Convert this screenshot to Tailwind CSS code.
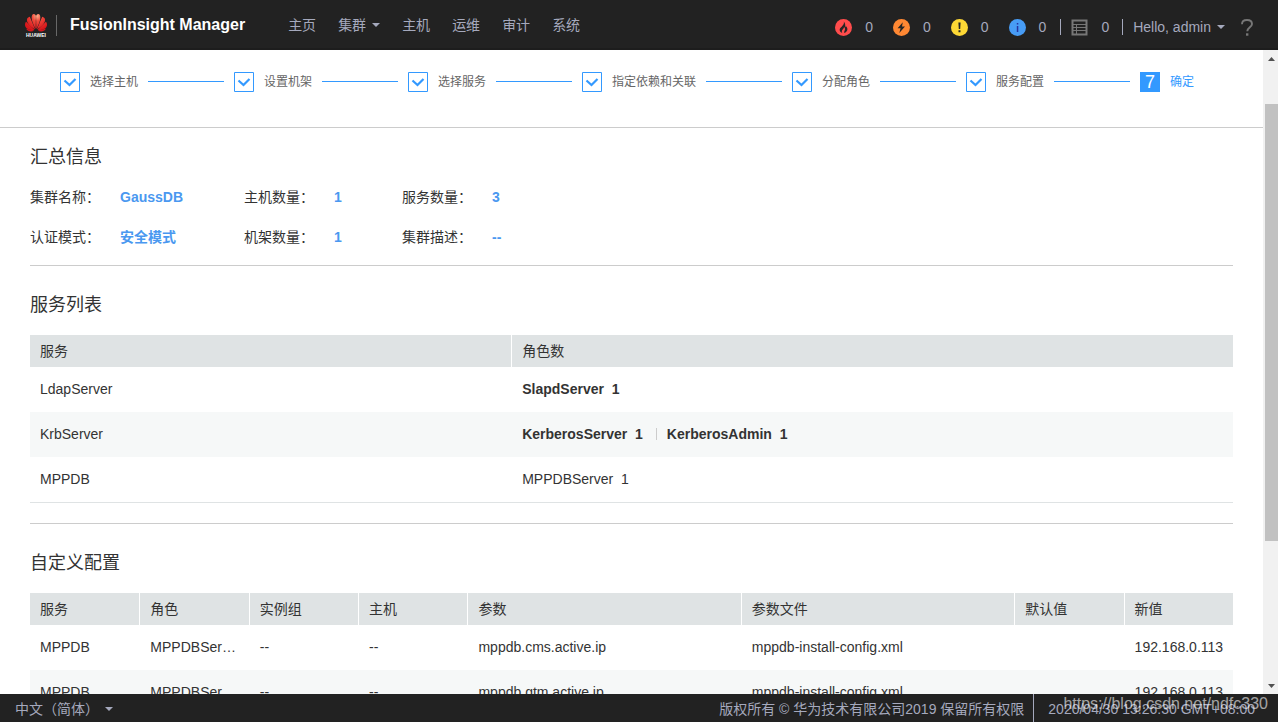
<!DOCTYPE html>
<html lang="zh-CN">
<head>
<meta charset="utf-8">
<title>FusionInsight Manager</title>
<script src="https://cdn.jsdelivr.net/npm/@tailwindcss/browser@4"></script>
</head>
<body class="flex h-screen flex-col overflow-hidden bg-white font-['Liberation_Sans','Noto_Sans_CJK_SC',sans-serif] text-sm leading-5 text-[#333333]">

<header class="flex h-[50px] shrink-0 items-center bg-[#222222] pl-6 pr-[25px] text-[#a5a9bd] shadow-[inset_0_-2px_0_#1d1d1d]">
  <a href="#" class="flex items-center" aria-label="Huawei FusionInsight Manager">
    <svg class="h-[26px] w-6" viewBox="0 0 24 26" aria-hidden="true">
      <defs>
        <radialGradient id="petal" gradientUnits="userSpaceOnUse" cx="13" cy="4" r="14">
          <stop offset="0" stop-color="#ffb08a"/><stop offset=".35" stop-color="#f04a3c"/><stop offset="1" stop-color="#d8161b"/>
        </radialGradient>
      </defs>
      <g fill="url(#petal)">
        <path d="M11.700 17C8 11 6.300 4 8.900 2.300c1.600-.7 2.900.4 3 2z"/>
        <path d="M12.300 17C16 11 17.700 4 15.100 2.300c-1.600-.7-2.900.4-3 2z"/>
        <path d="M11.100 17.300C6.500 15.500 1.800 9.800 3.100 6.800c.5-1.200 1.700-1.800 2.700-2.100z"/>
        <path d="M12.900 17.300c4.600-1.800 9.300-7.500 8-10.500-.5-1.200-1.700-1.800-2.700-2.100z"/>
        <path d="M10.500 18C5 18.400 1.100 16 1 12.900c0-1.300.5-2.500 1.100-3.200z"/>
        <path d="M13.500 18c5.500.4 9.400-2 9.500-5.100 0-1.300-.5-2.500-1.100-3.200z"/>
        <path d="M10.200 18.500c-2.100 1.500-6.200 1.700-8.100-1.700z"/>
        <path d="M13.800 18.500c2.100 1.500 6.200 1.700 8.100-1.700z"/>
      </g>
      <text x="12" y="25" text-anchor="middle" font-size="5" font-weight="700" fill="#ffffff">HUAWEI</text>
    </svg>
    <span class="ml-2 h-[21px] w-px bg-[#686868]"></span>
    <span class="ml-[13px] whitespace-nowrap text-base font-bold leading-6 text-white">FusionInsight Manager</span>
  </a>
  <nav class="ml-[43px] flex items-center gap-[22px] whitespace-nowrap">
    <a href="#">主页</a>
    <a href="#" class="flex items-center gap-1.5">集群<svg class="h-1 w-2" viewBox="0 0 8 4" fill="currentColor" aria-hidden="true"><path d="M0 0h8L4 4z"/></svg></a>
    <a href="#">主机</a>
    <a href="#">运维</a>
    <a href="#">审计</a>
    <a href="#">系统</a>
  </nav>
  <div class="ml-auto flex items-center whitespace-nowrap pt-1">
    <div class="flex items-center gap-5">
      <a href="#" class="flex items-center gap-[13px]" aria-label="紧急告警 0">
        <svg class="size-[17px]" viewBox="0 0 17 17" aria-hidden="true"><circle cx="8.500" cy="8.500" r="8.500" fill="#ff4c4c"/><path d="M8.800 2.600c.6 2.200-.5 3.400-1.900 4.900C5.300 9 4.500 9.700 4.700 11.200c.2 1.400 1.400 2.300 2.600 2.700-.9-1.500-.4-2.700.6-3.700.9-.9 1.200-1.600 1-2.500 1 .9 1.400 2.100.9 3.400-.3.9-.8 1.600-.5 2.800 1.700-.5 3.100-1.900 3.100-3.700 0-1.500-.7-2.500-1.500-3.300-.1.700-.3 1.100-.7 1.400.3-2.300-.1-4.300-1.400-5.700z" fill="#252525"/></svg>0</a>
      <a href="#" class="flex items-center gap-[13px]" aria-label="重要告警 0">
        <svg class="size-[17px]" viewBox="0 0 17 17" aria-hidden="true"><circle cx="8.500" cy="8.500" r="8.500" fill="#ff8833"/><path d="M9.800 3.200 4.600 9.200h3L6.300 13.900l5.700-6.300H9z" fill="#252525"/></svg>0</a>
      <a href="#" class="flex items-center gap-[13px]" aria-label="次要告警 0">
        <svg class="size-[17px]" viewBox="0 0 17 17" aria-hidden="true"><circle cx="8.500" cy="8.500" r="8.500" fill="#fdd835"/><path d="M7.400 3.500h2.200L9.200 10H7.800zM7.500 11.300h2v2h-2z" fill="#252525"/></svg>0</a>
      <a href="#" class="flex items-center gap-[13px]" aria-label="提示告警 0">
        <svg class="size-[17px]" viewBox="0 0 17 17" aria-hidden="true"><circle cx="8.500" cy="8.500" r="8.500" fill="#479cf5"/><path d="M7.800 4h1.500v1.600H7.800zM7.800 7h1.500v6H7.800z" fill="#2632a0"/></svg>0</a>
    </div>
    <span class="ml-[14px] h-4 w-px bg-[#a5a9bd]"></span>
    <a href="#" class="ml-[10px] flex items-center gap-[13px]" aria-label="任务 0">
      <svg class="size-[17px]" viewBox="0 0 17 17" fill="none" stroke="#777777" aria-hidden="true"><path d="M1.500 1.500h14v14h-14z" stroke-width="2"/><path d="M2 5.500h13M2 8.500h13M2 11.500h13M5.500 5v10" stroke-width="1"/></svg>0</a>
    <span class="ml-[13px] h-4 w-px bg-[#a5a9bd]"></span>
    <button type="button" class="ml-[10px] flex items-center gap-1.5">Hello, admin<svg class="h-1 w-2" viewBox="0 0 8 4" fill="currentColor" aria-hidden="true"><path d="M0 0h8L4 4z"/></svg></button>
    <a href="#" class="ml-4" aria-label="帮助"><svg class="h-[17px] w-3" viewBox="0 0 12 17" aria-hidden="true"><path d="M1 5.200C1 2.400 3 1 6 1s5 1.500 5 3.900c0 3.200-4.700 3.400-4.700 7.300" fill="none" stroke="#777777" stroke-width="1.900"/><path d="M5 14.300h2.400v2.400H5z" fill="#777777"/></svg></a>
  </div>
</header>

<div class="flex min-h-0 flex-1">
  <main class="min-w-0 flex-1 overflow-hidden">
    <ol class="flex h-[78px] items-start gap-2.5 whitespace-nowrap border-b border-[#cccccc] pl-[60px] pt-[22px] text-xs leading-5 text-[#666666]">
      <li class="flex items-center gap-2.5"><svg class="size-5" viewBox="0 0 20 20" fill="none" stroke="#3399ff" aria-hidden="true"><path d="M.5.5h19v19H.5z"/><path d="m4.500 8.500 5 4.500 6-6" stroke-width="2.200"/></svg>选择主机<span class="h-0.5 w-[76px] border-t border-[#3399ff]"></span></li>
      <li class="flex items-center gap-2.5"><svg class="size-5" viewBox="0 0 20 20" fill="none" stroke="#3399ff" aria-hidden="true"><path d="M.5.5h19v19H.5z"/><path d="m4.500 8.500 5 4.500 6-6" stroke-width="2.200"/></svg>设置机架<span class="h-0.5 w-[76px] border-t border-[#3399ff]"></span></li>
      <li class="flex items-center gap-2.5"><svg class="size-5" viewBox="0 0 20 20" fill="none" stroke="#3399ff" aria-hidden="true"><path d="M.5.5h19v19H.5z"/><path d="m4.500 8.500 5 4.500 6-6" stroke-width="2.200"/></svg>选择服务<span class="h-0.5 w-[76px] border-t border-[#3399ff]"></span></li>
      <li class="flex items-center gap-2.5"><svg class="size-5" viewBox="0 0 20 20" fill="none" stroke="#3399ff" aria-hidden="true"><path d="M.5.5h19v19H.5z"/><path d="m4.500 8.500 5 4.500 6-6" stroke-width="2.200"/></svg>指定依赖和关联<span class="h-0.5 w-[76px] border-t border-[#3399ff]"></span></li>
      <li class="flex items-center gap-2.5"><svg class="size-5" viewBox="0 0 20 20" fill="none" stroke="#3399ff" aria-hidden="true"><path d="M.5.5h19v19H.5z"/><path d="m4.500 8.500 5 4.500 6-6" stroke-width="2.200"/></svg>分配角色<span class="h-0.5 w-[76px] border-t border-[#3399ff]"></span></li>
      <li class="flex items-center gap-2.5"><svg class="size-5" viewBox="0 0 20 20" fill="none" stroke="#3399ff" aria-hidden="true"><path d="M.5.5h19v19H.5z"/><path d="m4.500 8.500 5 4.500 6-6" stroke-width="2.200"/></svg>服务配置<span class="h-0.5 w-[76px] border-t border-[#3399ff]"></span></li>
      <li class="flex items-center gap-2.5 text-[#3399ff]" aria-current="step"><span class="size-5 bg-[#3399ff] text-center text-lg leading-5 text-white">7</span>确定</li>
    </ol>

    <div class="px-[30px]">
      <section class="border-b border-[#cccccc] pb-[18px] pt-[17px]">
        <h2 class="text-lg leading-6">汇总信息</h2>
        <dl class="mt-[18px] grid grid-cols-[90px_124px_90px_68px_90px_auto] gap-y-5 whitespace-nowrap">
          <dt>集群名称：</dt><dd class="font-bold text-[#4a98f0]">GaussDB</dd>
          <dt>主机数量：</dt><dd class="font-bold text-[#4a98f0]">1</dd>
          <dt>服务数量：</dt><dd class="font-bold text-[#4a98f0]">3</dd>
          <dt>认证模式：</dt><dd class="font-bold text-[#4a98f0]">安全模式</dd>
          <dt>机架数量：</dt><dd class="font-bold text-[#4a98f0]">1</dd>
          <dt>集群描述：</dt><dd class="font-bold text-[#4a98f0]">--</dd>
        </dl>
      </section>

      <section class="border-b border-[#cccccc] pb-5 pt-[27px]">
        <h2 class="text-lg leading-6">服务列表</h2>
        <table class="mt-[18px] w-full table-fixed border-separate border-spacing-0 text-left">
          <colgroup><col class="w-[40%]"><col></colgroup>
          <thead><tr class="h-8 bg-[#dfe3e4]">
            <th class="px-2.5 font-normal">服务</th><th class="border-l border-white px-2.5 font-normal">角色数</th>
          </tr></thead>
          <tbody>
            <tr class="h-[45px]"><td class="px-2.5 pb-0.5">LdapServer</td><td class="pl-[11px] pr-2.5 pb-0.5 font-bold">SlapdServer&nbsp; 1</td></tr>
            <tr class="h-[45px] bg-[#f6f8f8]"><td class="px-2.5 pb-0.5">KrbServer</td><td class="pl-[11px] pr-2.5 pb-0.5 font-bold"><div class="flex items-center"><span>KerberosServer&nbsp; 1</span><span class="ml-[13px] mr-2.5 h-3 w-px bg-[#cccccc]"></span><span>KerberosAdmin&nbsp; 1</span></div></td></tr>
            <tr class="h-[46px]"><td class="border-b border-[#dfe3e4] px-2.5 pb-0.5">MPPDB</td><td class="border-b border-[#dfe3e4] pl-[11px] pr-2.5 pb-0.5">MPPDBServer&nbsp; 1</td></tr>
          </tbody>
        </table>
      </section>

      <section class="pt-[27px]">
        <h2 class="text-lg leading-6">自定义配置</h2>
        <table class="mt-[18px] w-full table-fixed border-separate border-spacing-0 whitespace-nowrap text-left">
          <colgroup><col class="w-1/11"><col class="w-1/11"><col class="w-1/11"><col class="w-1/11"><col class="w-5/22"><col class="w-5/22"><col class="w-1/11"><col class="w-1/11"></colgroup>
          <thead><tr class="h-8 bg-[#dfe3e4]">
            <th class="px-2.5 font-normal">服务</th>
            <th class="border-l border-white px-2.5 font-normal">角色</th>
            <th class="border-l border-white px-2.5 font-normal">实例组</th>
            <th class="border-l border-white px-2.5 font-normal">主机</th>
            <th class="border-l border-white px-2.5 font-normal">参数</th>
            <th class="border-l border-white px-2.5 font-normal">参数文件</th>
            <th class="border-l border-white px-2.5 font-normal">默认值</th>
            <th class="border-l border-white px-2.5 font-normal">新值</th>
          </tr></thead>
          <tbody>
            <tr class="h-[45px]"><td class="px-2.5 pb-0.5">MPPDB</td><td class="truncate pl-[11px] pr-2 pb-0.5">MPPDBServer</td><td class="pl-[11px] pb-0.5">--</td><td class="pl-[11px] pb-0.5">--</td><td class="pl-[11px] pb-0.5">mppdb.cms.active.ip</td><td class="pl-[11px] pb-0.5">mppdb-install-config.xml</td><td class="pl-[11px] pb-0.5"></td><td class="pl-[11px] pb-0.5">192.168.0.113</td></tr>
            <tr class="h-[45px] bg-[#f6f8f8]"><td class="px-2.5 pb-0.5">MPPDB</td><td class="truncate pl-[11px] pr-2 pb-0.5">MPPDBServer</td><td class="pl-[11px] pb-0.5">--</td><td class="pl-[11px] pb-0.5">--</td><td class="pl-[11px] pb-0.5">mppdb.gtm.active.ip</td><td class="pl-[11px] pb-0.5">mppdb-install-config.xml</td><td class="pl-[11px] pb-0.5"></td><td class="pl-[11px] pb-0.5">192.168.0.113</td></tr>
          </tbody>
        </table>
      </section>
    </div>
  </main>

  <div class="flex w-[15px] shrink-0 flex-col bg-[#f1f1f1] pl-0.5" aria-hidden="true">
    <div class="flex h-[17px] items-center justify-center"><svg class="h-1 w-[7px]" viewBox="0 0 7 4" fill="#505050"><path d="M0 4h7L3.500 0z"/></svg></div>
    <div class="flex flex-1 flex-col">
      <div class="grow-[37]"></div><div class="grow-[437] bg-[#c1c1c1]"></div><div class="grow-[136]"></div>
    </div>
    <div class="flex h-[17px] items-center justify-center"><svg class="h-1 w-[7px]" viewBox="0 0 7 4" fill="#505050"><path d="M0 0h7L3.500 4z"/></svg></div>
  </div>
</div>

<footer class="relative flex h-7 shrink-0 items-center whitespace-nowrap bg-[#222222] pl-[15px] pr-[23px] text-[#a5a9bd]">
  <button type="button" class="flex items-center gap-1.5 pt-0.5">中文（简体）<svg class="h-1 w-2" viewBox="0 0 8 4" fill="currentColor" aria-hidden="true"><path d="M0 0h8L4 4z"/></svg></button>
  <span class="ml-auto pt-0.5">版权所有 © 华为技术有限公司2019 保留所有权限</span>
  <span class="ml-[9px] mr-[14px] h-7 w-px bg-[#a5a9bd]"></span>
  <time class="pt-0.5">2020/04/30 13:26:30 GMT+08:00</time>
  <span class="absolute right-2.5 top-0 text-base leading-5 text-white/60">https://blog.csdn.net/ndfc330</span>
</footer>
</body>
</html>
